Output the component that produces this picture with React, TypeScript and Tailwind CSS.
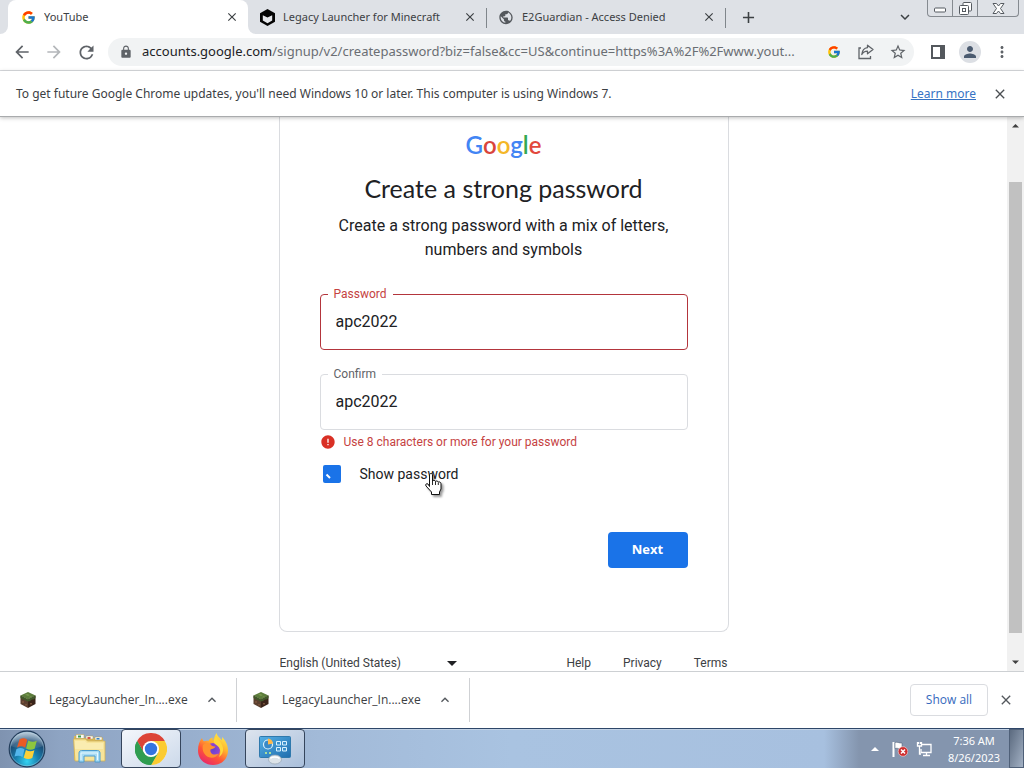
import React from "react";
import { FcGoogle } from "react-icons/fc";
import {
  MdAdd,
  MdArrowBack,
  MdArrowForward,
  MdClose,
  MdError,
  MdKeyboardArrowDown,
  MdKeyboardArrowUp,
  MdLock,
  MdMoreVert,
  MdPerson,
  MdPublic,
  MdRefresh,
  MdStarBorder,
} from "react-icons/md";

function LauncherIcon() {
  return (
    <svg viewBox="0 0 16 18" className="h-[17px] w-[15px]" aria-hidden="true">
      <path d="M8 0 16 4.500v9L8 18 0 13.500v-9z" fill="#050505" />
      <path d="M3 6.500 8 9l5-2.500v5.700L8 15l-5-2.800z" fill="#e6e8ec" />
    </svg>
  );
}

function ShareIcon() {
  return (
    <svg viewBox="0 0 18 18" className="h-[18px] w-[18px]" fill="none" stroke="#5f6368" strokeWidth="1.300" aria-hidden="true">
      <path d="M4 5H2v10.500h11.500V13" />
      <path d="M10.500 2.200 16 6.500l-5.500 4.300V8.200C8 8.200 6 9.200 4.800 11.500 5.200 7.500 7.500 5 10.500 4.700z" strokeLinejoin="round" />
    </svg>
  );
}

function GrassBlock() {
  return (
    <svg viewBox="0 0 16 16" className="h-4 w-4 shrink-0" aria-hidden="true">
      <path d="M8 0 15.500 3.500 8 7.500.5 3.500z" fill="#5c7c3c" />
      <path d="M.5 3.500 8 7.500V16L.5 12z" fill="#5b4030" />
      <path d="M15.500 3.500 8 7.500V16l7.500-4z" fill="#3a2419" />
      <path d="M.5 3.500 8 7.500v2L6.500 9 5 8 3 7.500.5 6zM15.500 3.500 8 7.500v2l2-.5 2-1.500 1.500 0 2-1.500z" fill="#40582a" />
      <path d="m5 2.500 2-.8 3 1.300-2 1zM9 5l2-.8 1 .4-2 1z" fill="#78994e" />
      <path d="M2 9h2v2H2zM5 12h2v1.500H5zM10 11h2v1.500h-2z" fill="#76513a" />
    </svg>
  );
}

function StartOrb() {
  return (
    <svg viewBox="0 0 38 38" className="h-[38px] w-[38px]" aria-hidden="true">
      <defs>
        <radialGradient id="orb" cx="50%" cy="85%" r="80%">
          <stop offset="0" stopColor="#35d3f2" />
          <stop offset=".4" stopColor="#187fae" />
          <stop offset=".75" stopColor="#1c4b74" />
          <stop offset="1" stopColor="#7f9fba" />
        </radialGradient>
        <linearGradient id="orbShine" x1="0" y1="0" x2="0" y2="1">
          <stop offset="0" stopColor="#fff" stopOpacity=".75" />
          <stop offset="1" stopColor="#fff" stopOpacity=".12" />
        </linearGradient>
      </defs>
      <circle cx="19" cy="19" r="17.800" fill="url(#orb)" stroke="#243e5c" strokeWidth="1.200" />
      <circle cx="19" cy="19" r="16.700" fill="none" stroke="#a8d0e3" strokeOpacity=".6" strokeWidth=".7" />
      <path d="M2.500 16C4 7 10 2.300 19 2.300S34 7 35.500 16C25 20 13 20 2.500 16z" fill="url(#orbShine)" opacity=".55" />
      <path d="M11.500 9.500c3-1.800 5-1.500 7.700.2l-2 8c-2.700-1.700-5.200-1.800-8.200-.2z" fill="#ea5b25" />
      <path d="M20.300 10.500c3 1.800 5.500 1.700 8.500.2l-2.200 8c-3 1.500-5.500 1.400-8.500-.2z" fill="#8dc63f" />
      <path d="M8.500 19c3-1.500 5.200-1.300 8 .3l-2 7.700c-2.700-1.600-5.200-1.700-8-.5z" fill="#54b6ec" />
      <path d="M17.900 20c3 1.700 5.500 1.600 8.500.2l-2.100 7.800c-3 1.500-5.700 1.300-8.600-.3z" fill="#fdd038" />
    </svg>
  );
}

function ExplorerIcon() {
  return (
    <svg viewBox="0 0 34 32" className="h-8 w-[34px]" aria-hidden="true">
      <path d="M2 3h9l1 2h19v22H2z" fill="#d9b959" />
      <path d="M4 1.500h8v4H4zM14 3h7v3h-7zM23 4h7v3h-7z" fill="#f7faf5" stroke="#b79a4c" strokeWidth=".5" />
      <path d="M6 2.500h3v2H6z" fill="#3d9b51" />
      <path d="M15.500 4h3v2h-3z" fill="#d65544" />
      <path d="M24.500 5h3v1.500h-3z" fill="#3783c4" />
      <path d="M1.500 6h12l2 2H33v20H3z" fill="#f7e49a" stroke="#cfae55" strokeWidth=".8" />
      <path d="M3 8h10l2 2h16v6H3z" fill="#fbefb9" opacity=".7" />
      <path d="M7 29V20c0-1.500 1-2.500 2.500-2.500h16c1.500 0 2.500 1 2.500 2.500v9h-5v-6H12v6z" fill="#a7dbf4" stroke="#4c9cce" strokeWidth="1" />
      <path d="M9 20h17M9 20v7M25.500 20v7" stroke="#e7f8ff" fill="none" />
    </svg>
  );
}

function ChromeIcon() {
  return (
    <svg viewBox="0 0 32 32" className="h-8 w-8" aria-hidden="true">
      <circle cx="16" cy="16" r="16" fill="#fff" />
      <path d="M16 16 2.140 8A16 16 0 0 1 29.860 8H16z" fill="#dc4437" />
      <path d="M16 8h13.860A16 16 0 0 1 16 32l6.930-12z" fill="#fbcb31" />
      <path d="M9.070 20 2.140 8A16 16 0 0 0 16 32l6.930-12z" fill="#2f9d50" />
      <path d="M16 8A8 8 0 0 0 9.070 20L2.140 8z" fill="#dc4437" />
      <path d="M9.070 20 2.140 8A16 16 0 0 0 16 32l6.930-12A8 8 0 0 1 9.070 20z" fill="#2f9d50" />
      <circle cx="16" cy="16" r="8" fill="#fff" />
      <circle cx="16" cy="16" r="6.200" fill="#3474e0" />
    </svg>
  );
}

function FirefoxIcon() {
  return (
    <svg viewBox="0 0 32 32" className="h-8 w-8" aria-hidden="true">
      <defs>
        <linearGradient id="fox" x1=".8" y1="0" x2=".2" y2="1">
          <stop offset="0" stopColor="#fff04d" />
          <stop offset=".35" stopColor="#ffb52e" />
          <stop offset=".65" stopColor="#ff5537" />
          <stop offset="1" stopColor="#e62370" />
        </linearGradient>
        <radialGradient id="globe">
          <stop offset="0" stopColor="#6544cf" />
          <stop offset="1" stopColor="#9546d2" />
        </radialGradient>
      </defs>
      <path d="M5 5c.3 1.500 1 2.500 2 3.300 2-.8 3-.8 4.500-.3 1-2 2.500-3 4.500-3.400-.8 1.200-.8 2.200-.2 3 1.400-2.500 2-5 3.700-7.600.5 3.200 3 4.300 5.200 7.200.4-1 .5-2 .3-3.200 3.500 3.500 6 8 6 13.200C31 26 24.500 32 16 32S1 26 1 17.500C1 12 2.500 8 5 5z" fill="url(#fox)" />
      <circle cx="16" cy="17" r="7" fill="url(#globe)" />
      <path d="M6 12c2.500-2.500 6-3 8.500.5 1 1 2.500.8 4 1-1 2-3 2.200-5 3-1 4 3 6.500 8 4-2 4.500-8 5.500-12 2.500C6 20 5 16 6 12z" fill="#ff922f" />
      <path d="M19 3c1.500 4 6 6 7 12 .5 4-1 7-4 9 3-6 1-10-4-13-2-2-1-5 1-8z" fill="#ffd83b" />
    </svg>
  );
}

function ControlPanelIcon() {
  return (
    <svg viewBox="0 0 32 32" className="h-8 w-8" aria-hidden="true">
      <defs>
        <linearGradient id="panel" x1="0" y1="0" x2="1" y2="1">
          <stop offset="0" stopColor="#55b0e6" />
          <stop offset="1" stopColor="#1f6dae" />
        </linearGradient>
      </defs>
      <rect x=".5" y="3.500" width="31" height="21" rx="1" fill="url(#panel)" stroke="#2f79ad" />
      <circle cx="9" cy="11.500" r="4.500" fill="#3a8ac8" stroke="#dcf2fc" strokeWidth="1.200" />
      <path d="M9 11.500V5.500a6 6 0 0 1 5 5z" fill="#ffb84a" />
      <path d="M17.500 8.500h4v3.500h-4zM23.500 8.500h4v3.500h-4zM17.500 14.500h4V18h-4zM23.500 14.500h4V18h-4z" fill="#3d91cc" stroke="#d9f1ff" />
      <path d="M6 20h2M10 20h2" stroke="#a9df9c" strokeWidth="2" />
      <ellipse cx="16" cy="26.500" rx="6.500" ry="4.500" fill="#dce3e8" stroke="#93a4b2" strokeWidth=".7" />
      <path d="M11.500 25.500c1-2 7-2 9 0" stroke="#fff" strokeWidth="1.500" fill="none" />
    </svg>
  );
}

function HandCursor() {
  return (
    <svg viewBox="0 0 20 24" className="pointer-events-none absolute -bottom-3 right-3.5 h-6 w-5 drop-shadow-[2px_2px_1px_rgba(0,0,0,0.4)]" aria-hidden="true">
      <path
        d="M5.500 14.500V3c0-2 3-2 3 0v6c.5-1 2.700-.8 3 .4.700-.7 2.500-.5 2.800.7.900-.6 2.700 0 2.700 1.700V17l-1.500 3v2.500H7.500V20L2 14c-1-1.500.5-3 2-2z"
        fill="#fff"
        stroke="#111"
        strokeWidth="1"
        strokeLinejoin="round"
      />
      <path d="M8.500 9v4M11.500 9.500V13M14.300 10.500V13" stroke="#111" strokeWidth=".9" />
    </svg>
  );
}

type TabProps = { icon: React.ReactNode; title: string; active?: boolean };

function Tab({ icon, title, active }: TabProps) {
  return (
    <div
      className={
        active
          ? "flex h-[34px] w-60 items-center rounded-t-lg bg-white pl-3 pr-2"
          : "flex h-[34px] w-[238px] items-center pl-[11px] pr-2"
      }
    >
      <span className="flex w-4 shrink-0 items-center justify-center">{icon}</span>
      <span className="ml-2 flex-1 truncate text-[11px] text-[#3c4043]">{title}</span>
      <button type="button" aria-label={"Close " + title} className="flex h-4 w-4 items-center justify-center text-[#3c4043]">
        <MdClose size={14} />
      </button>
    </div>
  );
}

function TabStrip() {
  return (
    <header className="flex h-[34px] shrink-0 bg-white">
      <div className="w-2 shrink-0 rounded-br-lg bg-[#dee1e6]" />
      <div className="shrink-0 bg-[linear-gradient(#dee1e6_50%,#fff_50%)]">
        <Tab active icon={<FcGoogle size={15} />} title="YouTube" />
      </div>
      <div className="flex flex-1 rounded-bl-lg bg-[#dee1e6]">
        <Tab icon={<LauncherIcon />} title="Legacy Launcher for Minecraft" />
        <span className="mt-2 h-5 w-px shrink-0 bg-[#80868b]" />
        <Tab icon={<MdPublic size={17} color="#54585d" />} title="E2Guardian - Access Denied" />
        <span className="mt-2 h-5 w-px shrink-0 bg-[#80868b]" />
        <button type="button" aria-label="New tab" className="ml-3 flex w-5 items-center justify-center text-[#3c4043]">
          <MdAdd size={19} />
        </button>
        <div className="flex-1" />
        <button type="button" aria-label="Search tabs" className="mr-3 flex w-5 items-center justify-center text-[#3c4043]">
          <MdKeyboardArrowDown size={18} />
        </button>
        <div className="mr-[5px] flex h-[17px] w-[92px] rounded-b border border-t-0 border-[#858a90] text-[#555a60]">
          <button type="button" aria-label="Minimize" className="flex w-[25px] items-center justify-center border-r border-[#858a90]">
            <svg viewBox="0 0 12 6" className="mt-1 h-[6px] w-3" fill="#fff" stroke="currentColor">
              <rect x=".5" y="1" width="11" height="4" rx="1" />
            </svg>
          </button>
          <button type="button" aria-label="Restore" className="flex w-[25px] items-center justify-center border-r border-[#858a90]">
            <svg viewBox="0 0 13 13" className="h-[13px] w-[13px]" fill="#fff" stroke="currentColor">
              <rect x="4" y=".5" width="8.500" height="8.500" rx="1" />
              <rect x=".5" y="3.500" width="9" height="9" rx="1" />
              <rect x="3.500" y="6.500" width="3" height="3" />
            </svg>
          </button>
          <button type="button" aria-label="Close window" className="flex flex-1 items-center justify-center">
            <svg viewBox="0 0 13 11" className="h-[11px] w-[13px]" fill="#fff" stroke="currentColor" strokeLinejoin="round">
              <path d="M1 .5h3.500l2 2.500 2-2.500H12L8.500 5.500 12 10.500H8.500l-2-2.500-2 2.500H1l3.500-5z" />
            </svg>
          </button>
        </div>
      </div>
    </header>
  );
}

const toolButton = "flex h-8 w-8 shrink-0 items-center justify-center text-[#5f6368]";

function Toolbar() {
  return (
    <nav className="flex h-[37px] shrink-0 items-center border-b border-[#dadce0] bg-white px-[6px]">
      <button type="button" aria-label="Back" className={toolButton}><MdArrowBack size={20} /></button>
      <button type="button" aria-label="Forward" className="flex h-8 w-8 shrink-0 items-center justify-center text-[#b4b7ba]"><MdArrowForward size={20} /></button>
      <button type="button" aria-label="Reload" className={toolButton}><MdRefresh size={21} /></button>
      <div className="ml-[6px] mr-2 flex h-7 flex-1 items-center rounded-full bg-[#f1f3f4] pl-[11px]">
        <MdLock size={14} color="#5f6368" className="shrink-0" />
        <label htmlFor="address" className="ml-[9px] shrink-0 text-[13px] text-[#202124]">accounts.google.com</label>
        <input
          id="address"
          defaultValue="/signup/v2/createpassword?biz=false&cc=US&continue=https%3A%2F%2Fwww.yout..."
          className="min-w-0 flex-1 bg-transparent text-[13px] text-[#6a6e73] outline-none"
        />
        <button type="button" aria-label="Google Lens" className={toolButton}><FcGoogle size={14} /></button>
        <button type="button" aria-label="Share" className={toolButton}><ShareIcon /></button>
        <button type="button" aria-label="Bookmark" className={toolButton}><MdStarBorder size={18} /></button>
      </div>
      <button type="button" aria-label="Side panel" className={toolButton}>
        <svg viewBox="0 0 14 14" className="h-[14px] w-[14px]">
          <path d="M1 1h12v12H1z" fill="none" stroke="#54585d" strokeWidth="2" />
          <path d="M9 1h4v12H9z" fill="#54585d" />
        </svg>
      </button>
      <button type="button" aria-label="Profile" className={toolButton}>
        <span className="flex h-[22px] w-[22px] items-center justify-center rounded-full bg-[#dcdfe4]"><MdPerson size={18} color="#4b5b70" /></span>
      </button>
      <button type="button" aria-label="Menu" className={toolButton}><MdMoreVert size={18} /></button>
    </nav>
  );
}

function InfoBar() {
  return (
    <div className="relative z-10 flex h-[46px] shrink-0 items-center border-b border-[#a9abad] bg-white px-4 text-[12px] text-[#3c4043] shadow-[0_1px_4px_rgba(0,0,0,0.25)]">
      <p className="flex-1">To get future Google Chrome updates, you'll need Windows 10 or later. This computer is using Windows 7.</p>
      <a href="#learn" className="text-[#3673c4] underline">Learn more</a>
      <button type="button" aria-label="Dismiss" className="ml-4 text-[#4b4f53]"><MdClose size={16} /></button>
    </div>
  );
}

type FieldProps = { id: string; label: string; invalid?: boolean };

function Field({ id, label, invalid }: FieldProps) {
  return (
    <div className="relative">
      <label
        htmlFor={id}
        className={
          invalid
            ? "absolute -top-2 left-2 bg-white px-[6px] text-[12px] leading-4 text-[#c5423f]"
            : "absolute -top-2 left-2 bg-white px-[6px] text-[12px] leading-4 text-[#5f6368]"
        }
      >
        {label}
      </label>
      <input
        id={id}
        defaultValue="apc2022"
        className={
          invalid
            ? "block h-14 w-full rounded border border-[#b3353c] px-[15px] pb-[2px] text-[16px] text-[#202124] outline-none"
            : "block h-14 w-full rounded border border-[#dadce0] px-[15px] pb-[2px] text-[16px] text-[#202124] outline-none"
        }
      />
    </div>
  );
}

function SignupCard() {
  return (
    <form className="flex min-h-[515px] w-[450px] flex-col rounded-b-lg border border-t-0 border-[#dadce0] px-10 pt-3">
      <div className="text-center font-['Lato'] text-[24px] font-semibold leading-8 text-[#4285f4]" aria-label="Google">
        G<span className="text-[#d9453b]">o</span><span className="text-[#f4b728]">o</span>g<span className="text-[#34a853]">l</span><span className="text-[#e2483d]">e</span>
      </div>
      <h1 className="mt-[11px] text-center font-['Lato'] text-[25px] leading-8 text-[#202124]">Create a strong password</h1>
      <p className="mx-auto mt-[10px] max-w-[350px] text-center text-[16px] leading-6 text-[#202124]">
        Create a strong password with a mix of letters, numbers and symbols
      </p>
      <div className="mt-8 flex flex-col gap-6">
        <Field id="password" label="Password" invalid />
        <Field id="confirm" label="Confirm" />
      </div>
      <p className="mt-1 flex items-center gap-2 text-[12px] leading-4 text-[#c5423f]">
        <MdError size={16} color="#d93025" />
        Use 8 characters or more for your password
      </p>
      <div className="mt-[14px] flex h-5 items-center pl-[3px]">
        <span className="relative flex h-[18px] w-[18px]">
          <input id="show" type="checkbox" defaultChecked className="h-[18px] w-[18px] appearance-none rounded-xs bg-[#1a73e8]" />
          <svg viewBox="0 0 18 18" className="pointer-events-none absolute inset-0" fill="none" stroke="#fff" strokeWidth="2">
            <path d="m3.500 9.500 3.500 3.500" />
          </svg>
        </span>
        <span className="relative ml-[19px] flex">
          <label htmlFor="show" className="text-[14px] leading-5 text-[#202124]">Show password</label>
          <HandCursor />
        </span>
      </div>
      <button type="button" className="mt-12 h-9 w-20 self-end rounded bg-[#1a73e8] font-['Open_Sans'] text-[13px] font-bold text-white">Next</button>
    </form>
  );
}

function PageFooter() {
  return (
    <footer className="flex w-[450px] shrink-0 items-center text-[12px] leading-4 text-[#3c4043]">
      <div className="relative flex-1">
        <select aria-label="Language" className="w-[180px] appearance-none bg-transparent pl-px outline-none">
          <option>English (United States)</option>
        </select>
        <svg viewBox="0 0 10 5" className="pointer-events-none absolute left-[168px] top-[6px] h-[5px] w-[10px]">
          <path d="M0 0h10L5 5z" fill="#202124" />
        </svg>
      </div>
      <div className="flex gap-8 pr-px">
        <a href="#help">Help</a>
        <a href="#privacy">Privacy</a>
        <a href="#terms">Terms</a>
      </div>
    </footer>
  );
}

function ScrollRail() {
  return (
    <div className="flex w-[17px] shrink-0 flex-col items-center bg-[#f1f1f1]" aria-hidden="true">
      <svg viewBox="0 0 17 17" className="h-[17px] w-[17px]"><path d="M5 10.500h7L8.500 7z" fill="#404040" /></svg>
      <div className="flex w-full flex-1 flex-col px-[2px] pb-[21px] pt-12">
        <div className="flex-1 bg-[#c1c1c1]" />
      </div>
      <svg viewBox="0 0 17 17" className="h-[17px] w-[17px]"><path d="M5 6.500h7L8.500 10z" fill="#404040" /></svg>
    </div>
  );
}

function Download() {
  return (
    <div className="my-[6px] flex w-[233px] items-center border-r border-[#cfd1d4] px-4 text-[12px] text-[#3c4043]">
      <GrassBlock />
      <span className="ml-[13px] flex-1">LegacyLauncher_In....exe</span>
      <button type="button" aria-label="Download options"><MdKeyboardArrowUp size={16} color="#54585d" /></button>
    </div>
  );
}

function DownloadShelf() {
  return (
    <section className="flex h-[57px] shrink-0 border-t border-[#cdd0d3] bg-white pl-1 pr-[10px] font-['Open_Sans','Noto_Sans',sans-serif]">
      <Download />
      <Download />
      <div className="flex-1" />
      <div className="flex items-center gap-[10px]">
        <button type="button" className="h-8 w-[78px] rounded border border-[#dadce0] text-[12px] font-medium text-[#3569bd]">Show all</button>
        <button type="button" aria-label="Close downloads" className="text-[#54585d]"><MdClose size={16} /></button>
      </div>
    </section>
  );
}

function Taskbar() {
  return (
    <footer className="flex h-10 shrink-0 items-stretch border-t border-[#2e4668] bg-[linear-gradient(90deg,#7f93b0_0px,#8ea4c3_60px,#a2bad8_320px,#a9c3e1_50%,#a7c0df_calc(100%_-_200px),#8495ae_calc(100%_-_165px),#8495ae_100%)] shadow-[inset_0_1px_0_#c3d3e6]">
      <button type="button" aria-label="Start" className="flex w-[54px] items-center justify-center"><StartOrb /></button>
      <button type="button" aria-label="Explorer" className="ml-[5px] flex w-[60px] items-center justify-center"><ExplorerIcon /></button>
      <button type="button" aria-label="Chrome" className="ml-[2px] flex w-[60px] items-center justify-center rounded-sm border border-[#35455c] bg-linear-to-br from-[#f4f7fb] to-[#ccd9ea]"><ChromeIcon /></button>
      <button type="button" aria-label="Firefox" className="ml-[2px] flex w-[60px] items-center justify-center"><FirefoxIcon /></button>
      <button type="button" aria-label="Control Panel" className="ml-[2px] flex w-[60px] items-center justify-center rounded-sm border border-[#35455c] bg-linear-to-br from-[#dde4ee] to-[#a9bfdb]"><ControlPanelIcon /></button>
      <div className="flex-1" />
      <div className="flex items-center text-white">
        <svg viewBox="0 0 8 4" className="mr-[13px] h-1 w-2"><path d="M4 0 8 4H0z" fill="#fff" /></svg>
        <svg viewBox="0 0 16 16" className="mr-2 h-4 w-4" aria-label="Action center">
          <path d="M1.500 1v15" stroke="#fff" strokeWidth="2" />
          <path d="M3 1.500c3-1 4 1 7 .5v6c-3 .5-4-1.500-7-.5z" fill="#fff" stroke="#46566d" strokeWidth=".5" />
          <circle cx="11" cy="10.500" r="4.800" fill="#ce2f2f" stroke="#fbdada" strokeWidth=".6" />
          <path d="m9 8.500 4 4m0-4-4 4" stroke="#fff" strokeWidth="1.500" />
        </svg>
        <svg viewBox="0 0 16 16" className="mr-[14px] h-4 w-4" fill="none" stroke="#fff" strokeWidth="1.300" aria-label="Network">
          <path d="M6 3.500h9v8H5V8M7 14.500h7M10.500 12v2.500" />
          <path d="M1.500 1v4h4V1M3.500 5v8H5M2.500 1v2M4.500 1v2" />
        </svg>
        <div className="w-[56px] text-center text-[11px] leading-[17px]">
          <p>7:36 AM</p>
          <p>8/26/2023</p>
        </div>
      </div>
      <div className="ml-[7px] w-[15px] border border-[#4f6078] bg-linear-to-br from-[#5c6b80] to-[#a3b1c4]" />
    </footer>
  );
}

export default function App() {
  return (
    <div className="flex h-screen min-h-[600px] flex-col overflow-hidden bg-white font-['Noto_Sans',sans-serif]">
      <TabStrip />
      <Toolbar />
      <InfoBar />
      <div className="flex min-h-0 flex-1">
        <main className="flex min-w-0 flex-1 flex-col items-center gap-[23px] overflow-hidden font-['Roboto',sans-serif]">
          <SignupCard />
          <PageFooter />
        </main>
        <ScrollRail />
      </div>
      <DownloadShelf />
      <Taskbar />
    </div>
  );
}
